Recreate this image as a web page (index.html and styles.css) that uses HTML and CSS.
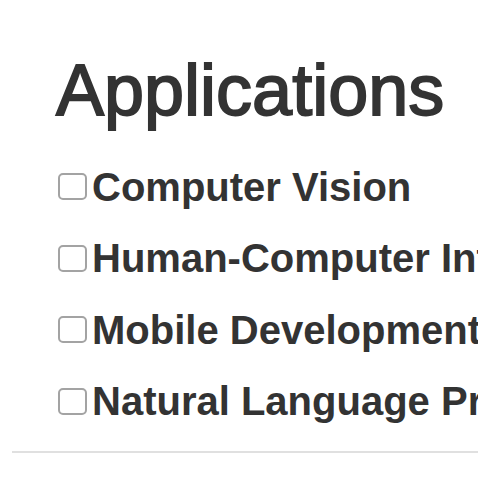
FILE: index.html
```html
<!DOCTYPE html>
<html lang="en">
<head>
<meta charset="utf-8">
<title>Applications</title>
<link rel="stylesheet" href="styles.css">
</head>
<body>
<section class="filter">
  <h2 class="filter-title">Applications</h2>
  <ul class="filter-list">
    <li class="filter-item"><label><input type="checkbox" class="filter-check">Computer Vision</label></li>
    <li class="filter-item"><label><input type="checkbox" class="filter-check">Human-Computer Interaction</label></li>
    <li class="filter-item"><label><input type="checkbox" class="filter-check">Mobile Development</label></li>
    <li class="filter-item"><label><input type="checkbox" class="filter-check">Natural Language Processing</label></li>
  </ul>
</section>
<hr class="divider">
</body>
</html>
```
FILE: styles.css
```css
html, body {
  margin: 0;
  padding: 0;
  background: #fff;
  overflow: hidden;
}

body {
  width: 478px;
  height: 480px;
  font-family: "Liberation Sans", Arial, Helvetica, sans-serif;
  color: #333;
}

.filter {
  padding: 54px 0 0 56px;
}

.filter-title {
  margin: 0;
  font-size: 72px;
  line-height: 72px;
  font-weight: 400;
  -webkit-text-stroke: 1.8px #333;
  white-space: nowrap;
}

.filter-list {
  list-style: none;
  margin: 38.5px 0 0;
  padding: 0;
  display: flex;
  flex-direction: column;
  gap: 27.5px;
}

.filter-item label {
  display: flex;
  align-items: center;
  gap: 5px;
  height: 44px;
  font-size: 40px;
  line-height: 44px;
  font-weight: 700;
  white-space: nowrap;
}

.filter-check {
  appearance: none;
  -webkit-appearance: none;
  flex: none;
  width: 29px;
  height: 27px;
  margin: 0 0 0 2px;
  border: 2px solid #a3a3a3;
  border-radius: 5px;
  background: #fff;
  box-sizing: border-box;
}

.divider {
  margin: 28px 0 0 12px;
  border: 0;
  border-top: 2px solid #e0e0e0;
  height: 0;
}
```
